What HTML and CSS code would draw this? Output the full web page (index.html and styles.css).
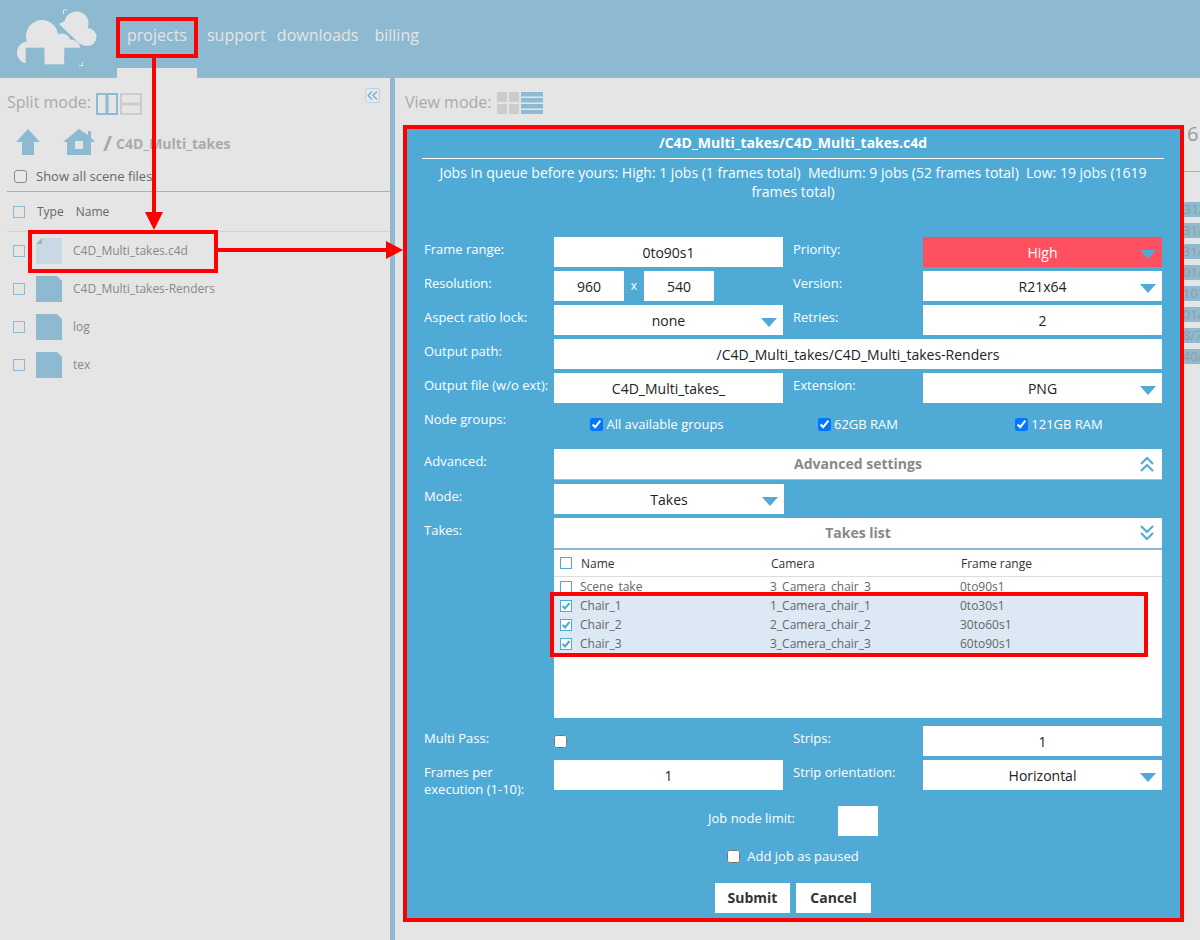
FILE: index.html
```html
<!DOCTYPE html>
<html lang="en">
<head>
<meta charset="utf-8">
<title>Projects</title>
<link rel="stylesheet" href="styles.css">
</head>
<body>
<header class="topbar">
  <a class="logo" href="#">
    <svg width="117" height="78" viewBox="0 0 117 78">
      <g fill="#e5e5e5">
        <circle cx="42" cy="36" r="16"/>
        <circle cx="28" cy="52.500" r="11"/>
        <circle cx="62" cy="42" r="8.500"/>
        <circle cx="71" cy="49" r="9.500"/>
        <rect x="28" y="36" width="40" height="12"/>
        <rect x="44.300" y="47" width="20" height="17.300"/>
      </g>
      <rect x="25.700" y="47.700" width="18.600" height="18" fill="#8dbad0"/>
      <rect x="64.300" y="47.700" width="20" height="14" fill="#8dbad0"/>
      <path d="M56 20 L90 52 L96 40 L88 18 L70 8 Z" fill="#8dbad0"/>
      <g fill="#e5e5e5">
        <circle cx="76.500" cy="23.500" r="12"/>
        <circle cx="87.500" cy="37" r="9"/>
        <path d="M59 24 L68 19 L84 30 L85 46 L80 44 Z"/>
      </g>
      <path d="M67.500 10 H63.500 V14 M79 65.500 H82.500 V62" fill="none" stroke="#e5e5e5"/>
    </svg>
  </a>
  <nav class="nav">
    <a class="nav-item nav-active" href="#">projects</a>
    <a class="nav-item" href="#">support</a>
    <a class="nav-item nav-downloads" href="#">downloads</a>
    <a class="nav-item nav-billing" href="#">billing</a>
  </nav>
</header>

<div class="shell">
  <aside class="sidebar">
    <div class="split-row">
      <span class="mode-label">Split mode:</span>
      <svg class="split-icon" width="22" height="22" viewBox="0 0 22 22"><path d="M1 1H21V21H1Z M11 1V21" fill="none" stroke="#8dbad0" stroke-width="2"/><rect x="9.500" y="1" width="3" height="20" fill="#8dbad0"/></svg>
      <svg class="split-icon" width="22" height="22" viewBox="0 0 22 22"><path d="M1 1H21V21H1Z" fill="none" stroke="#cccccc" stroke-width="2"/><rect x="1" y="9.500" width="20" height="3" fill="#cccccc"/></svg>
      <button class="collapse" type="button" aria-label="Collapse">
        <svg width="11" height="9" viewBox="0 0 11 9"><path d="M5 .5 1 4.500 5 8.500M10 .5 6 4.500 10 8.500" fill="none" stroke="#7ea9c4" stroke-width="1.300"/></svg>
      </button>
    </div>
    <div class="path-row">
      <svg class="up-icon" width="24" height="26" viewBox="0 0 24 26"><path d="M12 0 24 13H18V26H6V13H0Z" fill="#8dbad0"/></svg>
      <svg class="home-icon" width="32" height="26" viewBox="0 0 32 26"><path d="M16 0 25 6V2H28V8.500L32 13H28V26H4V13H0ZM12 12V20H20V12Z" fill="#8dbad0" fill-rule="evenodd"/></svg>
      <span class="path-slash">/</span>
      <span class="path-name">C4D_Multi_takes</span>
    </div>
    <label class="show-all"><input class="plain-check" type="checkbox"> Show all scene files</label>
    <div class="file-head">
      <span class="box"></span>
      <span class="col-type">Type</span>
      <span>Name</span>
    </div>
    <ul class="files">
      <li class="file">
        <span class="box"></span>
        <svg class="file-icon" width="26" height="26" viewBox="0 0 26 26"><path d="M0 6 6 0H26V26H0Z" fill="#c9d9e3"/><path d="M0 6 6 0V6Z" fill="#8dbad0"/></svg>
        <span class="file-name">C4D_Multi_takes.c4d</span>
      </li>
      <li class="file">
        <span class="box"></span>
        <svg class="file-icon" width="26" height="26" viewBox="0 0 26 26"><path d="M0 0H21L26 5V26H0Z" fill="#8dbad0"/></svg>
        <span class="file-name">C4D_Multi_takes-Renders</span>
      </li>
      <li class="file">
        <span class="box"></span>
        <svg class="file-icon" width="26" height="26" viewBox="0 0 26 26"><path d="M0 0H21L26 5V26H0Z" fill="#8dbad0"/></svg>
        <span class="file-name">log</span>
      </li>
      <li class="file">
        <span class="box"></span>
        <svg class="file-icon" width="26" height="26" viewBox="0 0 26 26"><path d="M0 0H21L26 5V26H0Z" fill="#8dbad0"/></svg>
        <span class="file-name">tex</span>
      </li>
    </ul>
  </aside>

  <main class="content">
    <div class="view-row">
      <span class="mode-label">View mode:</span>
      <svg width="22" height="22" viewBox="0 0 22 22"><path d="M0 0H10V10H0ZM12 0H22V10H12ZM0 12H10V22H0ZM12 12H22V22H12Z" fill="#cccccc"/></svg>
      <svg width="22" height="22" viewBox="0 0 22 22"><path d="M0 0H22V4.500H0ZM0 6H22V10.500H0ZM0 12H22V16.500H0ZM0 18H22V22H0Z" fill="#8dbad0"/></svg>
    </div>
    <div class="behind">
      <div class="behind-count">61</div>
      <div class="behind-line"></div>
      <div class="behind-rows">
        <div class="behind-row">31/</div>
        <div class="behind-row behind-cut">31/</div>
        <div class="behind-row behind-cut">31/</div>
        <div class="behind-row behind-cut">01/</div>
        <div class="behind-row behind-cut">101</div>
        <div class="behind-row behind-cut">01/</div>
        <div class="behind-row behind-cut">8/7</div>
        <div class="behind-row behind-cut">40/</div>
      </div>
    </div>

    <form class="modal">
      <h2 class="modal-title">/C4D_Multi_takes/C4D_Multi_takes.c4d</h2>
      <p class="queue">Jobs in queue before yours: High: 1 jobs (1 frames total)&nbsp; Medium: 9 jobs (52 frames total)&nbsp; Low: 19 jobs (1619 frames total)</p>

      <div class="fields fields-top">
        <label class="lbl">Frame range:</label>
        <div class="input">0to90s1</div>
        <span></span>
        <label class="lbl">Priority:</label>
        <div class="input select select-high">High<i class="caret"></i></div>

        <label class="lbl">Resolution:</label>
        <div class="res">
          <div class="input res-box">960</div>
          <span class="res-x">x</span>
          <div class="input res-box">540</div>
        </div>
        <span></span>
        <label class="lbl">Version:</label>
        <div class="input select">R21x64<i class="caret"></i></div>

        <label class="lbl">Aspect ratio lock:</label>
        <div class="input select">none<i class="caret"></i></div>
        <span></span>
        <label class="lbl">Retries:</label>
        <div class="input">2</div>

        <label class="lbl">Output path:</label>
        <div class="input span-rest">/C4D_Multi_takes/C4D_Multi_takes-Renders</div>

        <label class="lbl">Output file (w/o ext):</label>
        <div class="input">C4D_Multi_takes_</div>
        <span></span>
        <label class="lbl">Extension:</label>
        <div class="input select">PNG<i class="caret"></i></div>

        <label class="lbl">Node groups:</label>
        <div class="groups span-rest">
          <label class="group"><input type="checkbox" checked> All available groups</label>
          <label class="group"><input type="checkbox" checked> 62GB RAM</label>
          <label class="group"><input type="checkbox" checked> 121GB RAM</label>
        </div>
      </div>

      <div class="fields fields-mid">
        <label class="lbl">Advanced:</label>
        <div class="bar span-rest">Advanced settings
          <svg class="bar-chev" width="14" height="16" viewBox="0 0 14 16"><path d="M1 8 7 2 13 8M1 15 7 9 13 15" fill="none" stroke="#4faad5" stroke-width="2"/></svg>
        </div>

        <label class="lbl">Mode:</label>
        <div class="input select mode-select">Takes<i class="caret"></i></div>
        <span class="span-mode"></span>

        <label class="lbl">Takes:</label>
        <div class="takes span-rest">
          <div class="bar bar-takes">Takes list
            <svg class="bar-chev" width="14" height="16" viewBox="0 0 14 16"><path d="M1 1 7 7 13 1M1 8 7 14 13 8" fill="none" stroke="#4faad5" stroke-width="2"/></svg>
          </div>
          <div class="take-table">
            <div class="take-head">
              <span class="box box-take"></span>
              <span class="tk-name">Name</span>
              <span class="tk-cam">Camera</span>
              <span>Frame range</span>
            </div>
            <div class="take-row">
              <span class="box box-take"></span>
              <span class="tk-name">Scene_take</span>
              <span class="tk-cam">3_Camera_chair_3</span>
              <span>0to90s1</span>
            </div>
            <div class="take-row take-on">
              <span class="box box-take"><svg width="10" height="10" viewBox="0 0 10 10"><path d="M1.500 5 4 7.500 8.500 2" fill="none" stroke="#4faad5" stroke-width="2"/></svg></span>
              <span class="tk-name">Chair_1</span>
              <span class="tk-cam">1_Camera_chair_1</span>
              <span>0to30s1</span>
            </div>
            <div class="take-row take-on">
              <span class="box box-take"><svg width="10" height="10" viewBox="0 0 10 10"><path d="M1.500 5 4 7.500 8.500 2" fill="none" stroke="#4faad5" stroke-width="2"/></svg></span>
              <span class="tk-name">Chair_2</span>
              <span class="tk-cam">2_Camera_chair_2</span>
              <span>30to60s1</span>
            </div>
            <div class="take-row take-on">
              <span class="box box-take"><svg width="10" height="10" viewBox="0 0 10 10"><path d="M1.500 5 4 7.500 8.500 2" fill="none" stroke="#4faad5" stroke-width="2"/></svg></span>
              <span class="tk-name">Chair_3</span>
              <span class="tk-cam">3_Camera_chair_3</span>
              <span>60to90s1</span>
            </div>
          </div>
        </div>
      </div>

      <div class="fields fields-low">
        <label class="lbl">Multi Pass:</label>
        <div class="multi"><input type="checkbox"></div>
        <span></span>
        <label class="lbl">Strips:</label>
        <div class="input">1</div>

        <label class="lbl lbl-tall">Frames per execution (1-10):</label>
        <div class="input">1</div>
        <span></span>
        <label class="lbl">Strip orientation:</label>
        <div class="input select">Horizontal<i class="caret"></i></div>
      </div>

      <div class="limit-row">
        <label class="limit-label">Job node limit:</label>
        <div class="input limit-box"></div>
      </div>
      <label class="paused"><input type="checkbox"> Add job as paused</label>
      <div class="actions">
        <button class="btn" type="button">Submit</button>
        <button class="btn" type="button">Cancel</button>
      </div>
    </form>
  </main>
</div>

<svg class="notes" width="1200" height="940" viewBox="0 0 1200 940" aria-hidden="true">
  <g fill="none" stroke="#ff0000" stroke-width="4">
    <rect x="118" y="19" width="78" height="37"/>
    <rect x="30" y="232" width="186" height="39"/>
    <rect x="552" y="594" width="594" height="61"/>
    <path d="M154 58V214M218 250H388"/>
  </g>
  <path d="M145 212H163L154 230ZM386 241 403 250 386 259Z" fill="#ff0000"/>
</svg>
</body>
</html>
```

FILE: styles.css
```css
* { box-sizing: border-box; }
html, body { margin: 0; padding: 0; }
body {
  position: relative;
  width: 1200px;
  height: 940px;
  overflow: hidden;
  background: #e5e5e5;
  font-family: "Open Sans", "DejaVu Sans", sans-serif;
  font-size: 13px;
}
a { color: inherit; text-decoration: none; }
input { margin: 0; }
ul { list-style: none; margin: 0; padding: 0; }

.topbar {
  display: flex;
  height: 78px;
  background: #8dbad0;
}
.logo { display: block; width: 117px; height: 78px; }
.nav { display: flex; }
.nav-item {
  height: 78px;
  padding: 24px 10px 0;
  font-size: 16px;
  line-height: 22px;
  color: #e5e5e5;
}
.nav-active { border-bottom: 10px solid #e5e5e5; }
.nav-downloads { padding: 24px 0 0; margin-left: 1px; }
.nav-billing { padding: 24px 0 0; margin-left: 16px; }

.shell { display: flex; height: 862px; }
.sidebar {
  width: 395px;
  border-right: 5px solid #8dbad0;
  padding-top: 10px;
  color: #666666;
}
.split-row {
  display: flex;
  align-items: flex-start;
  padding: 0 10px 0 7px;
  height: 27px;
}
.mode-label {
  font-size: 16px;
  line-height: 22px;
  color: #aaaaaa;
  margin-right: 4px;
}
.split-row .mode-label { margin: 3px 5px 0 0; }
.split-icon { margin: 5px 2px 0 0; }
.collapse {
  margin-left: auto;
  width: 15px;
  height: 15px;
  padding: 0;
  display: flex;
  align-items: center;
  justify-content: center;
  background: #e3ebf1;
  border: 1px solid #b9d2e0;
  border-radius: 3px;
}

.path-row {
  display: flex;
  align-items: center;
  height: 26px;
  margin-top: 14px;
  padding-left: 16px;
}
.home-icon { margin-left: 23px; }
.path-slash {
  margin-left: 8px;
  font-size: 22px;
  font-weight: 700;
  color: #aaaaaa;
}
.path-name {
  margin: 2px 0 0 4px;
  font-size: 14px;
  font-weight: 700;
  color: #aaaaaa;
}

.show-all {
  display: flex;
  align-items: center;
  gap: 9px;
  margin-top: 13px;
  padding-left: 14px;
  height: 16px;
  line-height: 16px;
}
.plain-check {
  appearance: none;
  width: 13px;
  height: 13px;
  border: 1px solid #8a8a8a;
  border-radius: 3px;
  background: #e8e8e8;
}
.file-head {
  display: flex;
  align-items: center;
  margin: 7px 0 0 7px;
  height: 41px;
  padding-left: 6px;
  border-top: 1px solid #8dbad0;
  border-bottom: 1px solid #d2d2d2;
  font-size: 12px;
}
.col-type { margin: 0 12px 0 12px; }
.box {
  display: block;
  flex: none;
  width: 12px;
  height: 12px;
  border: 1px solid #8dbad0;
}
.file {
  display: flex;
  align-items: center;
  height: 38px;
  padding-left: 13px;
  font-size: 12px;
  color: #888888;
}
.file-icon { margin: 0 11px; }
.file-name { margin-bottom: 2px; }

.content {
  position: relative;
  flex: 1;
  min-width: 0;
  padding: 14px 0 0 10px;
}
.view-row {
  display: flex;
  align-items: flex-start;
  gap: 2px;
  height: 22px;
}
.view-row .mode-label { margin: -1px 3px 0 0; }

.behind {
  margin: 0 0 0 auto;
  width: 20px;
  overflow: hidden;
  color: #999999;
  white-space: nowrap;
}
.behind-count { height: 58px; padding: 6px 0 0 7px; font-size: 20px; line-height: 28px; }
.behind-line { height: 1px; margin-top: -1px; background: #8dbad0; }
.behind-rows { margin-top: 30px; }
.behind-row {
  height: 15px;
  margin-bottom: 6px;
  padding-left: 4px;
  background: #8dbad0;
  font-size: 13px;
  line-height: 15px;
}
.behind-cut { padding-left: 3px; }

.modal {
  position: absolute;
  left: 8px;
  top: 47px;
  width: 781px;
  height: 797px;
  border: 4px solid #ff0000;
  background: #4faad5;
  color: #ffffff;
  padding: 0 18px 0 17px;
}
.modal-title {
  margin: 0 -2px;
  height: 30px;
  border-bottom: 1px solid #ffffff;
  font-size: 14px;
  line-height: 28px;
  font-weight: 700;
  text-align: center;
}
.queue {
  margin: 4px 0 0;
  padding: 0 10px;
  height: 39px;
  font-size: 14px;
  line-height: 19px;
  text-align: center;
}

.fields {
  display: grid;
  grid-template-columns: 130px 229px 10px 130px 239px;
  row-gap: 4px;
}
.fields-top { margin-top: 35px; }
.fields-mid { margin-top: 4px; }
.fields-low { margin-top: 8px; }
.span-rest { grid-column: 2 / 6; }
.span-mode { grid-column: 3 / 6; }
.lbl { padding-top: 3px; line-height: 18px; }
.lbl-tall { padding-top: 4px; height: 40px; line-height: 17px; }
.input {
  display: flex;
  align-items: center;
  justify-content: center;
  height: 30px;
  background: #ffffff;
  color: #222222;
  font-size: 14px;
}
.select { position: relative; }
.select-high { background: #ff5060; color: #ffffff; }
.caret {
  position: absolute;
  right: 6px;
  top: 13px;
  width: 0;
  height: 0;
  border-left: 8px solid transparent;
  border-right: 8px solid transparent;
  border-top: 9px solid #4faad5;
}
.res { display: flex; height: 30px; }
.res-box { width: 70px; }
.res-x { width: 20px; height: 30px; text-align: center; line-height: 30px; font-size: 12px; }
.groups {
  display: grid;
  grid-template-columns: repeat(3, 201px);
  justify-content: center;
  height: 38px;
  padding-top: 7px;
}
.group {
  display: flex;
  align-items: flex-start;
  justify-content: center;
  gap: 3px;
  line-height: 20px;
}
.group input { margin-top: 4px; }
.bar {
  position: relative;
  height: 31px;
  background: #ffffff;
  border-bottom: 1px solid #9cc6dc;
  color: #888888;
  font-size: 14px;
  font-weight: 700;
  line-height: 29px;
  text-align: center;
}
.bar-chev { position: absolute; right: 8px; top: 7px; }
.bar-takes { height: 32px; border-bottom: 2px solid #8dbad0; }
.mode-select { width: 230px; }
.take-table { height: 168px; background: #ffffff; color: #666666; font-size: 12px; }
.take-head {
  display: flex;
  align-items: center;
  height: 27px;
  padding-left: 6px;
  border-bottom: 1px solid #dddddd;
  color: #333333;
}
.take-row {
  display: flex;
  align-items: center;
  height: 19px;
  width: 590px;
  padding-left: 6px;
}
.take-on { background: #dce8f4; }
.box-take {
  display: flex;
  align-items: center;
  justify-content: center;
  border-color: #4faad5;
  background: #ffffff;
}
.tk-name { width: 190px; margin-left: 8px; }
.take-head .tk-name { margin-left: 9px; }
.tk-cam { width: 190px; }
.multi { padding-top: 8px; }
.limit-row {
  display: flex;
  align-items: flex-start;
  margin: 6px 0 0 284px;
}
.limit-label { width: 130px; padding-top: 3px; line-height: 18px; }
.limit-box { width: 40px; }
.paused {
  display: flex;
  align-items: center;
  justify-content: center;
  gap: 7px;
  margin-top: 10px;
  height: 20px;
}
.actions {
  display: flex;
  justify-content: center;
  gap: 6px;
  margin-top: 17px;
}
.btn {
  width: 75px;
  height: 30px;
  padding: 0 0 2px;
  border: 0;
  background: #ffffff;
  color: #333333;
  font: 700 14px "Open Sans", sans-serif;
}

.notes { position: absolute; left: 0; top: 0; pointer-events: none; }
```
